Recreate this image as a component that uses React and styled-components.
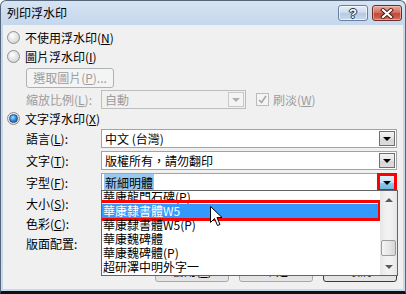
import React from "react";
import styled, { createGlobalStyle, css } from "styled-components";

const Global = createGlobalStyle`
  html, body { margin: 0; padding: 0; background: #ffffff; }
  body { font-family: "Noto Sans CJK TC", "Noto Sans", sans-serif; font-size: 12px; color: #000; }
  * { box-sizing: border-box; }
`;

const Window = styled.div`
  width: 406px;
  height: 294px;
  border: 1px solid #56677c;
  border-bottom: 3px solid #111;
  border-radius: 6px 6px 0 0;
  background: linear-gradient(#d6e3f2, #c4d7ed 24px, #c6d9ee);
  padding: 0 2px 2px 2px;
  display: flex;
  flex-direction: column;
  overflow: hidden;
`;

const TitleBar = styled.div`
  height: 24px;
  display: flex;
  align-items: center;
  padding: 0 1px 0 4px;
`;

const Title = styled.div`
  flex: 1;
  font-size: 12px;
  line-height: 14px;
  color: #000;
`;

const CaptionBtn = styled.div`
  width: 30px;
  height: 16px;
  border-radius: 3px;
  display: flex;
  align-items: center;
  justify-content: center;
  margin-left: 4px;
  ${(p) =>
    p.$close
      ? css`
          border: 1px solid #6e2c24;
          background: linear-gradient(#e9a99a, #d47363 45%, #c0473a 55%, #d2705c);
          box-shadow: inset 0 0 0 1px rgba(255, 220, 210, 0.5);
        `
      : css`
          border: 1px solid #6a7f9b;
          background: linear-gradient(#e6eef8, #ccdcef 45%, #b4c9e3 55%, #c9dbef);
          box-shadow: inset 0 0 0 1px rgba(255, 255, 255, 0.6);
        `}
`;

const HelpGlyph = styled.span`
  font-family: "Liberation Sans", Arial, sans-serif;
  font-weight: bold;
  font-size: 13px;
  line-height: 13px;
  color: #fff;
  text-shadow: 0 0 1px #1d3458, 0 0 1px #1d3458, 1px 0 0 #1d3458, -1px 0 0 #1d3458, 0 1px 0 #1d3458, 0 -1px 0 #1d3458;
`;

const Body = styled.div`
  flex: 1;
  background: #f0f0f0;
  padding: 3px 6px 7px 4px;
  display: flex;
  flex-direction: column;
  position: relative;
`;

const RadioRow = styled.div`
  height: 19px;
  display: flex;
  align-items: center;
  gap: 5px;
`;

const Radio = styled.span`
  width: 13px;
  height: 13px;
  border-radius: 50%;
  border: 1px solid #8e8f8f;
  background: radial-gradient(circle at 40% 35%, #ffffff, #e6e6e6 45%, #c9c9c9);
  display: flex;
  align-items: center;
  justify-content: center;
  ${(p) =>
    p.$checked &&
    css`
      &::after {
        content: "";
        width: 7px;
        height: 7px;
        border-radius: 50%;
        background: radial-gradient(circle at 40% 35%, #a6dcff, #2a8ee0 50%, #0c4a94);
        border: 1px solid #24507f;
      }
    `}
`;

const Text = styled.span`
  font-size: 12px;
  line-height: 14px;
  white-space: nowrap;
  color: ${(p) => (p.$disabled ? "#9c9c9c" : "#000")};
`;

const PushButton = styled.div`
  height: ${(p) => p.$h || 23}px;
  width: ${(p) => p.$w}px;
  border: 1px solid ${(p) => (p.$default ? "#3a3a3a" : "#a9a9a9")};
  border-radius: 3px;
  background: linear-gradient(#f6f6f6, #ececec 50%, #dedede 51%, #e6e6e6);
  display: flex;
  align-items: center;
  justify-content: center;
  color: ${(p) => (p.$disabled ? "#9c9c9c" : "#000")};
  font-size: 12px;
  line-height: 14px;
  ${(p) =>
    p.$disabled &&
    css`
      background: #f4f4f4;
      border-color: #adb2b5;
    `}
`;

const Indent = styled.div`
  margin-left: 19px;
  margin-top: ${(p) => p.$mt || 0}px;
  display: flex;
  align-items: center;
  height: ${(p) => p.$h || 19}px;
`;

const FieldLabel = styled.span`
  width: 75px;
  font-size: 12px;
  line-height: 14px;
  white-space: nowrap;
  color: ${(p) => (p.$disabled ? "#9c9c9c" : "#000")};
`;

const Combo = styled.div`
  position: relative;
  width: ${(p) => p.$w}px;
  height: 19px;
  border: 1px solid ${(p) => (p.$disabled ? "#bdbdbd" : "#a3a3a3")};
  background: ${(p) => (p.$disabled ? "#f0f0f0" : "#ffffff")};
  display: flex;
  align-items: center;
  padding-left: 3px;
`;

const ComboText = styled.span`
  flex: 1;
  font-size: 12px;
  line-height: 14px;
  color: ${(p) => (p.$disabled ? "#9c9c9c" : "#000")};
  white-space: nowrap;
`;

const Selection = styled.span`
  background: #99c9ef;
  color: #000;
  padding: 0 1px;
  margin-left: -1px;
`;

const DropBtn = styled.div`
  position: relative;
  width: 16px;
  height: 15px;
  margin-right: 1px;
  border: 1px solid ${(p) => (p.$disabled ? "#c8c8c8" : "#6f6f6f")};
  background: ${(p) =>
    p.$active
      ? "linear-gradient(#e4f3fc, #bfe2f7 50%, #8fcdef 51%, #6db9e4)"
      : p.$disabled
      ? "#f4f4f4"
      : "linear-gradient(#f4f4f4, #e4e4e4 50%, #d6d6d6 51%, #dcdcdc)"};
  display: flex;
  align-items: center;
  justify-content: center;
  &::after {
    content: "";
    width: 0;
    height: 0;
    border-left: 4px solid transparent;
    border-right: 4px solid transparent;
    border-top: 4px solid ${(p) => (p.$disabled ? "#b0b0b0" : "#000")};
    margin-top: 1px;
  }
`;

const RedBox = styled.div`
  position: absolute;
  inset: ${(p) => p.$inset};
  border: 3px solid #ff0000;
  pointer-events: none;
`;

const CheckBox = styled.span`
  width: 13px;
  height: 13px;
  margin-left: 10px;
  border: 1px solid #bcbcbc;
  background: #f4f4f4;
  display: flex;
  align-items: center;
  justify-content: center;
`;

const FieldRow = styled.div`
  margin-left: 19px;
  margin-top: ${(p) => p.$mt || 0}px;
  height: ${(p) => p.$h || 19}px;
  display: flex;
  align-items: center;
`;

const ListBox = styled.div`
  position: absolute;
  left: -1px;
  top: 100%;
  margin-top: -1px;
  width: 297px;
  height: 86px;
  border: 1px solid #646464;
  background: #ffffff;
  display: flex;
  z-index: 5;
`;

const Items = styled.div`
  flex: 1;
  overflow: visible;
  margin-top: -1px;
  height: 84px;
  position: relative;
`;

const ItemsClip = styled.div`
  flex: 1;
  overflow: hidden;
  position: relative;
`;

const Item = styled.div`
  position: relative;
  height: 14px;
  padding-left: 1px;
  font-size: 12px;
  line-height: 14px;
  white-space: nowrap;
  ${(p) =>
    p.$selected &&
    css`
      background: #3399ff;
      color: #fff;
    `}
`;

const ScrollBar = styled.div`
  width: 17px;
  background: linear-gradient(90deg, #e6e6e6, #f2f2f2 40%, #f2f2f2 60%, #e6e6e6);
  display: flex;
  flex-direction: column;
`;

const ScrollArrow = styled.div`
  height: 17px;
  display: flex;
  align-items: center;
  justify-content: center;
  &::after {
    content: "";
    width: 0;
    height: 0;
    border-left: 4px solid transparent;
    border-right: 4px solid transparent;
    ${(p) =>
      p.$up
        ? css`
            border-bottom: 4px solid #5a5a5a;
          `
        : css`
            border-top: 4px solid #5a5a5a;
          `}
  }
`;

const Track = styled.div`
  flex: 1;
  display: flex;
  flex-direction: column;
  align-items: center;
`;

const Thumb = styled.div`
  margin-top: 32px;
  width: 15px;
  height: 16px;
  border: 1px solid #9c9c9c;
  border-radius: 2px;
  background: linear-gradient(90deg, #f4f4f4, #e8e8e8 50%, #d4d4d4);
`;

const Cursor = styled.svg`
  position: absolute;
  left: 108px;
  top: 2px;
  z-index: 10;
`;

const LabelRow = styled.div`
  margin-left: 19px;
  margin-top: ${(p) => p.$mt || 0}px;
  height: ${(p) => p.$h || 20}px;
  display: flex;
  align-items: center;
`;

const ButtonBar = styled.div`
  margin-top: auto;
  display: flex;
  justify-content: flex-end;
  gap: 10px;
`;

const fonts = [
  "華康龍門石碑(P)",
  "華康隸書體W5",
  "華康隸書體W5(P)",
  "華康魏碑體",
  "華康魏碑體(P)",
  "超研澤中明外字一",
];

export default function App() {
  return (
    <>
      <Global />
      <Window>
        <TitleBar>
          <Title>列印浮水印</Title>
          <CaptionBtn>
            <HelpGlyph>?</HelpGlyph>
          </CaptionBtn>
          <CaptionBtn $close>
            <svg width="14" height="11" viewBox="0 0 14 11">
              <path d="M3 2 L11 9 M11 2 L3 9" stroke="#4a1a14" strokeWidth="4" strokeLinecap="square" />
              <path d="M3 2 L11 9 M11 2 L3 9" stroke="#ffffff" strokeWidth="2.2" strokeLinecap="square" />
            </svg>
          </CaptionBtn>
        </TitleBar>
        <Body>
          <RadioRow>
            <Radio />
            <Text>不使用浮水印(<u>N</u>)</Text>
          </RadioRow>
          <RadioRow>
            <Radio />
            <Text>圖片浮水印(<u>I</u>)</Text>
          </RadioRow>
          <Indent $mt={2} $h={20}>
            <PushButton $w={88} $h={20} $disabled>
              選取圖片(<u>P</u>)...
            </PushButton>
          </Indent>
          <Indent $mt={2}>
            <FieldLabel $disabled>縮放比例(<u>L</u>):</FieldLabel>
            <Combo $w={145} $disabled>
              <ComboText $disabled>自動</ComboText>
              <DropBtn $disabled />
            </Combo>
            <CheckBox>
              <svg width="9" height="9" viewBox="0 0 9 9">
                <path d="M1 5 L3.5 7.5 L8 1" fill="none" stroke="#a8a8a8" strokeWidth="1.6" />
              </svg>
            </CheckBox>
            <Text $disabled style={{ marginLeft: 4 }}>刷淡(<u>W</u>)</Text>
          </Indent>
          <RadioRow>
            <Radio $checked />
            <Text>文字浮水印(<u>X</u>)</Text>
          </RadioRow>
          <FieldRow $mt={1}>
            <FieldLabel>語言(<u>L</u>):</FieldLabel>
            <Combo $w={296}>
              <ComboText>中文 (台灣)</ComboText>
              <DropBtn />
            </Combo>
          </FieldRow>
          <FieldRow $mt={3}>
            <FieldLabel>文字(<u>T</u>):</FieldLabel>
            <Combo $w={296}>
              <ComboText>版權所有，請勿翻印</ComboText>
              <DropBtn />
            </Combo>
          </FieldRow>
          <FieldRow $mt={3}>
            <FieldLabel>字型(<u>F</u>):</FieldLabel>
            <Combo $w={296}>
              <ComboText>
                <Selection>新細明體</Selection>
              </ComboText>
              <DropBtn $active>
                <RedBox $inset="-3px" />
              </DropBtn>
              <ListBox>
                <ItemsClip>
                  <Items>
                    {fonts.map((f, i) => (
                      <Item key={f} $selected={i === 1}>
                        {f}
                        {i === 1 && (
                          <>
                            <RedBox $inset="-4px -1px -3px -5px" />
                            <Cursor width="13" height="21" viewBox="0 0 13 21">
                              <path
                                d="M0.5 0.5 L0.5 16.5 L4.5 12.5 L7.5 19.5 L10 18.5 L7 11.5 L12 11.5 Z"
                                fill="#ffffff"
                                stroke="#000000"
                                strokeWidth="1"
                              />
                            </Cursor>
                          </>
                        )}
                      </Item>
                    ))}
                  </Items>
                </ItemsClip>
                <ScrollBar>
                  <ScrollArrow $up />
                  <Track>
                    <Thumb />
                  </Track>
                  <ScrollArrow />
                </ScrollBar>
              </ListBox>
            </Combo>
          </FieldRow>
          <LabelRow $mt={2}>
            <Text>大小(<u>S</u>):</Text>
          </LabelRow>
          <LabelRow>
            <Text>色彩(<u>C</u>):</Text>
          </LabelRow>
          <LabelRow $h={19}>
            <Text>版面配置:</Text>
          </LabelRow>
          <ButtonBar>
            <PushButton $w={74}>套用(<u>A</u>)</PushButton>
            <PushButton $w={74}>確定</PushButton>
            <PushButton $w={74} $default>取消</PushButton>
          </ButtonBar>
        </Body>
      </Window>
    </>
  );
}
